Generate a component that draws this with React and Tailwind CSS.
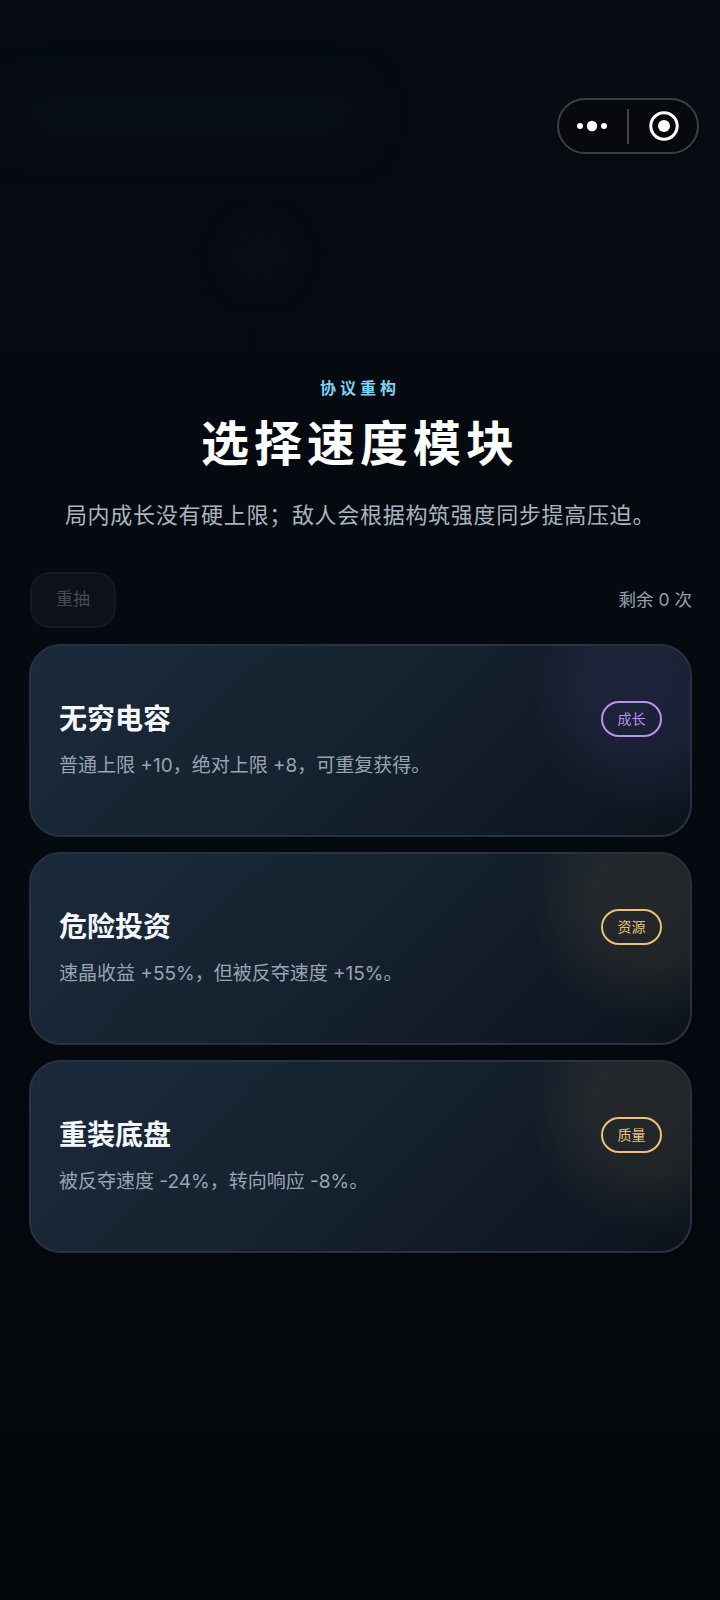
const cards = [
  {
    name: '无穷电容',
    desc: '普通上限 +10，绝对上限 +8，可重复获得。',
    tag: '成长',
    glow: 'bg-[radial-gradient(circle,rgba(139,120,240,0.10)_0%,rgba(139,120,240,0.09)_35%,transparent_72%)]',
    tagStyle: 'border-[#b794e8] text-[#b794e8]',
  },
  {
    name: '危险投资',
    desc: '速晶收益 +55%，但被反夺速度 +15%。',
    tag: '资源',
    glow: 'bg-[radial-gradient(circle,rgba(245,190,100,0.09)_0%,rgba(245,190,100,0.08)_35%,transparent_72%)]',
    tagStyle: 'border-[#e8c07a] text-[#e8c07a]',
  },
  {
    name: '重装底盘',
    desc: '被反夺速度 -24%，转向响应 -8%。',
    tag: '质量',
    glow: 'bg-[radial-gradient(circle,rgba(245,190,100,0.09)_0%,rgba(245,190,100,0.08)_35%,transparent_72%)]',
    tagStyle: 'border-[#eec07c] text-[#eec07c]',
  },
]

const Capsule = () => (
  <div className="flex h-[56px] w-[142px] items-center rounded-full border-2 border-[#3b3e43] bg-[#07090d]">
    <div className="flex w-[68px] justify-center pr-[2px]">
      <svg width="32" height="12" viewBox="0 0 32 12" fill="#fff">
        <circle cx="4" cy="6" r="3" />
        <circle cx="16" cy="6" r="5.2" />
        <circle cx="28" cy="6" r="3" />
      </svg>
    </div>
    <div className="h-[35px] w-[2px] bg-[#3f4247]" />
    <div className="flex flex-1 justify-center pl-[2px]">
      <svg width="32" height="32" viewBox="0 0 32 32" fill="none">
        <circle cx="16" cy="16" r="13.2" stroke="#fff" strokeWidth="3" />
        <circle cx="16" cy="16" r="6" fill="#fff" />
      </svg>
    </div>
  </div>
)

const Card = ({ card }) => (
  <div className="relative flex h-[193px] flex-col justify-center overflow-hidden rounded-[32px] border-2 border-[#27323f] bg-[linear-gradient(135deg,#1b2a3b_0%,#15212e_50%,#0c131d_100%)] px-[28px] pb-[2px]">
    <div className={`absolute right-[-82px] top-[-71px] h-[240px] w-[240px] ${card.glow}`} />
    <div className="relative flex items-center justify-between pb-[2px]">
      <h2 className="text-[28px] font-bold leading-[40px] text-[#f3f7fb]">{card.name}</h2>
      <span className={`flex h-[36px] w-[61px] items-center justify-center rounded-full border-2 pb-[1px] text-[14px] ${card.tagStyle}`}>
        {card.tag}
      </span>
    </div>
    <p className="relative mt-[10px] text-[19px] leading-[30px] text-[#98a4b2]">{card.desc}</p>
  </div>
)

export default function App() {
  return (
    <div
      className="relative h-[1600px] w-[720px] overflow-hidden bg-[linear-gradient(180deg,#060b12_0%,#050a11_50%,#03060a_100%)]"
      style={{ fontFamily: 'Inter, "Noto Sans CJK SC", sans-serif' }}
    >
      {/* faint blurred shapes behind the page */}
      <div className="absolute left-[20px] top-[90px] h-[50px] w-[340px] bg-[#080f14] blur-[20px]" />
      <div className="absolute left-[235px] top-[230px] h-[50px] w-[50px] rounded-full bg-[#0d1015] blur-[16px]" />

      <div className="relative flex flex-col">
        <div className="flex justify-end pr-[21px] pt-[98px]">
          <Capsule />
        </div>

        <div className="mt-[222px] flex flex-col items-center">
          <div className="text-[16px] font-bold leading-[24px] tracking-[4px] text-[#7dd3f5]">协议重构</div>
          <h1 className="mt-[12px] text-[48px] font-semibold leading-[64px] tracking-[5px] text-white">选择速度模块</h1>
          <p className="mt-[22px] text-[22px] leading-[34px] tracking-[0.7px] text-[#a9b4c0]">
            局内成长没有硬上限；敌人会根据构筑强度同步提高压迫。
          </p>
        </div>

        <div className="ml-[30px] mr-[28px] mt-[40px] flex items-center justify-between">
          <button className="h-[56px] w-[86px] rounded-[20px] border-2 border-[#141a20] bg-[#0d1218] text-[17px] text-[#454c53]">
            重抽
          </button>
          <span className="text-[17.5px] text-[#96a1ad]">剩余 0 次</span>
        </div>

        <div className="ml-[29px] mr-[28px] mt-[16px] flex flex-col gap-[15px]">
          {cards.map(card => <Card key={card.name} card={card} />)}
        </div>
      </div>
    </div>
  )
}
